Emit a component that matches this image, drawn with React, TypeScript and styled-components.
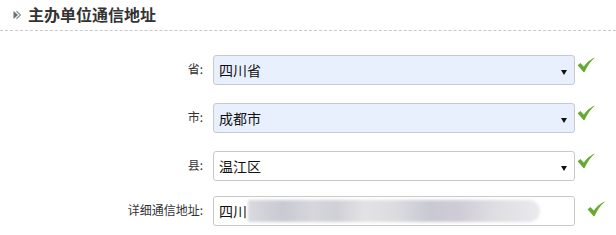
import * as React from 'react';
import styled, { createGlobalStyle } from 'styled-components';

const GlobalStyle = createGlobalStyle`
  html, body {
    margin: 0;
    padding: 0;
    background: #fff;
  }
  body {
    font-family: "Noto Sans CJK SC", "Liberation Sans", sans-serif;
    color: #333;
  }
`

const Page = styled.div`
  width: 616px;
`

const Header = styled.div`
  display: flex;
  align-items: center;
  gap: 7px;
  height: 31px;
  padding-left: 13px;
  border-bottom: 1px dashed #c8c8c8;
  box-sizing: border-box;
`

const Title = styled.h3`
  margin: 0;
  font-size: 16px;
  font-weight: bold;
  color: #333;
  line-height: 20px;
  margin-top: -2px;
`

const Form = styled.div`
  display: flex;
  flex-direction: column;
  padding-top: 24px;
`

const Row = styled.div<{ $gap: number }>`
  display: flex;
  align-items: flex-start;
  margin-bottom: ${p => p.$gap}px;
`

const Label = styled.label`
  width: 213px;
  padding-right: 10px;
  box-sizing: border-box;
  text-align: right;
  font-size: 12px;
  line-height: 16px;
  padding-top: 6px;
  color: #333;
`

const Field = styled.div<{ $filled?: boolean }>`
  position: relative;
  width: 362px;
  height: 30px;
  box-sizing: border-box;
  border: 1px solid #c9c9c9;
  border-radius: 3px;
  background: ${p => (p.$filled ? '#e8f0fe' : '#fff')};
  display: flex;
  align-items: center;
  padding-left: 5px;
  font-size: 14px;
  color: #111;
`

const Caret = styled.span`
  position: absolute;
  right: 7px;
  top: 14px;
  width: 0;
  height: 0;
  border-left: 3px solid transparent;
  border-right: 3px solid transparent;
  border-top: 5px solid #111;
`

const Blur = styled.span`
  display: inline-block;
  width: 292px;
  height: 22px;
  margin-left: 1px;
  filter: blur(1.5px);
  background: linear-gradient(
    90deg,
    #d9d9de 0%,
    #c8c9d2 12%,
    #d6d6dc 22%,
    #cfcfd6 30%,
    #e2e2e6 40%,
    #dcdce0 50%,
    #c8c9d3 62%,
    #cfcbd6 72%,
    #dddde2 84%,
    #eaeaee 100%
  );
  border-radius: 0 11px 11px 0;
`

const Check = styled.span<{ $offset: number; $top: number }>`
  display: flex;
  margin-left: ${p => p.$offset}px;
  padding-top: ${p => p.$top}px;
`

const ArrowIcon = () => (
  <svg width="8" height="10" viewBox="0 0 8 10">
    <path d="M0.5 1 L5 5 L0.5 9 Z" fill="#6f6f6f" />
    <path d="M3.5 1.2 L7.5 5 L3.5 8.8" fill="none" stroke="#8c8c8c" strokeWidth="1.2" />
  </svg>
)

const CheckIcon = () => (
  <svg width="18" height="16" viewBox="0 0 18 16">
    <path
      d="M0.6 8.2 L3.4 6 L6.8 9.6 C9.4 5.8 12.6 2.8 17.4 0.4 L17.6 1 C13.4 4.6 10.4 8.8 7.6 15 L6.4 15 Z"
      fill="#66aa33"
    />
  </svg>
)

const selects = [
  { label: '省:', value: '四川省', filled: true, gap: 18 },
  { label: '市:', value: '成都市', filled: true, gap: 18 },
  { label: '县:', value: '温江区', filled: false, gap: 15 },
]

export default function App() {
  return (
    <Page>
      <GlobalStyle />
      <Header>
        <ArrowIcon />
        <Title>主办单位通信地址</Title>
      </Header>
      <Form>
        {selects.map(s => (
          <Row key={s.label} $gap={s.gap}>
            <Label>{s.label}</Label>
            <Field $filled={s.filled}>
              {s.value}
              <Caret />
            </Field>
            <Check $offset={2} $top={2}>
              <CheckIcon />
            </Check>
          </Row>
        ))}
        <Row $gap={0}>
          <Label>详细通信地址:</Label>
          <Field>
            四川
            <Blur />
          </Field>
          <Check $offset={12} $top={5}>
            <CheckIcon />
          </Check>
        </Row>
      </Form>
    </Page>
  )
}
